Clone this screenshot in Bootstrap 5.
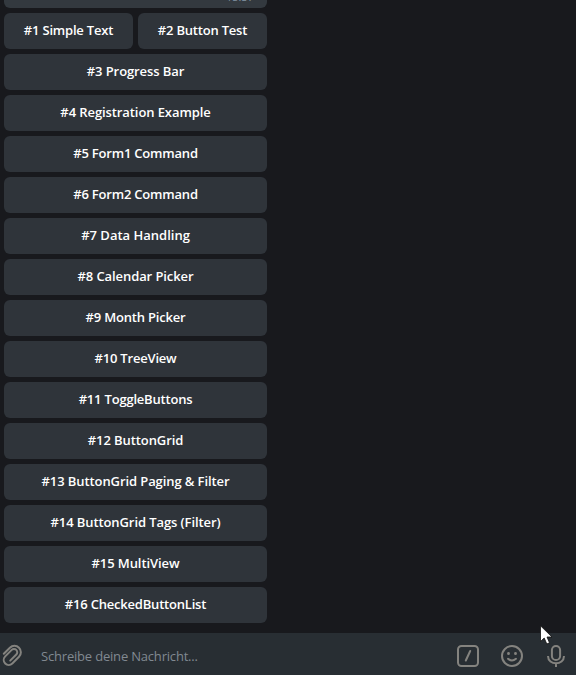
<!DOCTYPE html>
<html lang="de">
<head>
<meta charset="utf-8">
<meta name="viewport" content="width=device-width, initial-scale=1">
<title>Chat</title>
<link href="https://cdn.jsdelivr.net/npm/bootstrap@5.3.0/dist/css/bootstrap.min.css" rel="stylesheet">
<style>
  body { font-family: "Open Sans", "Noto Sans", sans-serif; font-size: 13px; background: #18191d; }
  .chat-window { height: 675px; }
  .keyboard { width: 267px; padding-left: 4px; gap: 5px; }
  .bubble { height: 8px; background: #33393f; border-radius: 0 0 6px 6px; }
  .bubble-time { font-size: 11px; line-height: 14px; color: #7b8c9c; padding-right: 13px; margin-top: -10px; }
  .key-row { gap: 5px; }
  .btn.key { height: 36px; padding: 0; background: #2f343a; color: #fff; border: 0; border-radius: 6px; font-size: 13px; font-weight: 600; line-height: 34px; padding-bottom: 2px; letter-spacing: -.09px; flex: 1 1 0; }
  .btn.key.key-tight { letter-spacing: -.2px; }
  .btn.key.key-wide { letter-spacing: 0; }
  .composer { height: 42px; background: #282e33; }
  .composer svg { display: block; fill: none; stroke: #84837f; stroke-width: 2; stroke-linecap: round; stroke-linejoin: round; margin-top: 2px; }
  .message-input.form-control { background: transparent; color: #818991; font-size: 13px; line-height: 18px; letter-spacing: -.19px; padding: 3px 0 0; margin-left: 17px; border: 0; }
  .message-input::placeholder { color: #818991 !important; opacity: 1; }
  .tools { gap: 20px; padding-right: 8px; }
  .pointer { left: 540px; top: 625px; }
</style>
</head>
<body>
<div class="chat-window position-relative d-flex flex-column overflow-hidden">
  <main class="keyboard d-flex flex-column flex-grow-1">
    <div class="bubble d-flex justify-content-end overflow-hidden"><span class="bubble-time">15:37</span></div>
    <div class="key-row d-flex"><button class="btn key key-tight">#1 Simple Text</button><button class="btn key key-tight">#2 Button Test</button></div>
    <div class="key-row d-flex"><button class="btn key">#3 Progress Bar</button></div>
    <div class="key-row d-flex"><button class="btn key">#4 Registration Example</button></div>
    <div class="key-row d-flex"><button class="btn key key-tight">#5 Form1 Command</button></div>
    <div class="key-row d-flex"><button class="btn key key-tight">#6 Form2 Command</button></div>
    <div class="key-row d-flex"><button class="btn key key-wide">#7 Data Handling</button></div>
    <div class="key-row d-flex"><button class="btn key">#8 Calendar Picker</button></div>
    <div class="key-row d-flex"><button class="btn key key-tight">#9 Month Picker</button></div>
    <div class="key-row d-flex"><button class="btn key key-tight">#10 TreeView</button></div>
    <div class="key-row d-flex"><button class="btn key key-tight">#11 ToggleButtons</button></div>
    <div class="key-row d-flex"><button class="btn key">#12 ButtonGrid</button></div>
    <div class="key-row d-flex"><button class="btn key">#13 ButtonGrid Paging &amp; Filter</button></div>
    <div class="key-row d-flex"><button class="btn key">#14 ButtonGrid Tags (Filter)</button></div>
    <div class="key-row d-flex"><button class="btn key">#15 MultiView</button></div>
    <div class="key-row d-flex"><button class="btn key key-tight">#16 CheckedButtonList</button></div>
  </main>
  <footer class="composer d-flex align-items-center flex-shrink-0">
    <svg class="flex-shrink-0" width="24" height="24" viewBox="0 0 24 24" aria-hidden="true"><path d="M3.800 10.800 9.900 4.700A6.400 6.400 0 0 1 19 13.800L12.300 20.500A5 5 0 0 1 5.200 13.400L11.700 6.900A3.200 3.200 0 0 1 16.300 11.500L10.200 17.600"/></svg>
    <input class="message-input form-control shadow-none" placeholder="Schreibe deine Nachricht..." aria-label="Nachricht">
    <div class="tools d-flex align-items-center flex-shrink-0">
      <svg width="24" height="24" viewBox="0 0 24 24" aria-hidden="true"><rect x="2" y="3" width="20" height="20" rx="3.500"/><path d="M14.200 8 9.800 17.500"/></svg>
      <svg width="24" height="24" viewBox="0 0 24 24" aria-hidden="true"><circle cx="12" cy="13" r="10"/><path d="M8 15.800Q12 19.300 16 15.800"/><path d="M8.500 10.500v.2M15.500 10.500v.2" stroke-width="2.800"/></svg>
      <svg width="24" height="24" viewBox="0 0 24 24" aria-hidden="true"><rect x="7.900" y="3" width="8.200" height="14" rx="4.100"/><path d="M4 13C4 22.700 20 22.700 20 13M12 20.500V24" stroke-linecap="butt"/></svg>
    </div>
  </footer>
  <svg class="pointer position-absolute" width="13" height="20" viewBox="0 0 13 20" aria-hidden="true"><path d="M.5.8V16.500L4.200 13 6.800 19 9.500 17.800 7 12H12Z" fill="#fff" stroke="#111" stroke-width=".8"/></svg>
</div>
<script src="https://cdn.jsdelivr.net/npm/bootstrap@5.3.0/dist/js/bootstrap.bundle.min.js"></script>
</body>
</html>
